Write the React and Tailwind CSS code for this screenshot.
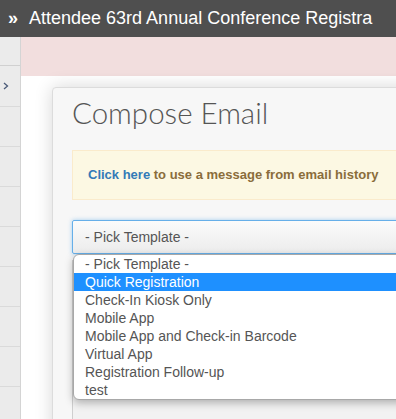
const templates = [
  '- Pick Template -',
  'Quick Registration',
  'Check-In Kiosk Only',
  'Mobile App',
  'Mobile App and Check-in Barcode',
  'Virtual App',
  'Registration Follow-up',
  'test',
];

function SideRail() {
  return (
    <div className="flex w-[21px] shrink-0 flex-col border-r border-[#d4d4d4] bg-[#ebebeb]">
      <div className="h-[29px] border-b border-[#d0d0d0]" />
      <div className="flex h-[41px] items-center border-b border-[#dadada] pl-[3px]">
        <svg width="6" height="8" viewBox="0 0 6 8" fill="none">
          <path d="M1 1l3.5 3L1 7" stroke="#4a5a78" strokeWidth="1.3" />
        </svg>
      </div>
      {[0, 1, 2, 3, 4, 5, 6].map((row) => (
        <div key={row} className="h-[40px] shrink-0 border-b border-[#dadada]" />
      ))}
    </div>
  );
}

export default function App() {
  return (
    <div className="flex h-[419px] w-[396px] flex-col overflow-hidden bg-white font-['Liberation_Sans',Arial,sans-serif]">
      <header className="flex h-[37px] shrink-0 items-center gap-[11px] whitespace-nowrap bg-[#4f4f4f] pl-[8px] text-[18px] text-white">
        <span className="font-bold">»</span>
        <span>Attendee 63rd Annual Conference Registra</span>
      </header>

      <div className="flex min-h-0 flex-1">
        <SideRail />

        <div className="flex min-w-0 flex-1 flex-col overflow-hidden">
          <div className="h-[39px] shrink-0 bg-[#f2dede]" />

          <div className="flex-1 pl-[31px] pt-[11px]">
            <div className="h-[400px] w-[420px] rounded-tl-[4px] border border-[#dcdcdc] bg-[#f7f7f7] pl-[19px] pt-[8px] shadow-[0_0_18px_rgba(0,0,0,0.16)]">
              <h1 className="font-['Lato',sans-serif] text-[29.5px] font-light leading-[33px] text-[#555]">
                Compose Email
              </h1>

              <div className="mt-[21px] border border-[#faebcc] bg-[#fcf8e3] px-[15px] py-[15px] text-[13px] font-bold leading-[18px] text-[#8a6d3b]">
                <span className="text-[#337ab7]">Click here</span> to use a message from email history
              </div>

              <div className="relative mt-[20px]">
                <div className="flex h-[34px] items-center rounded-[2px] border border-[#66afe9] bg-gradient-to-b from-[#fbfbfb] to-[#ececec] pl-[12px] text-[14px] text-[#555] shadow-[0_0_4px_rgba(102,175,233,0.6)]">
                  - Pick Template -
                </div>

                <div className="mt-[6px] h-[180px] border-l border-t border-[#cfcfcf] bg-[#f2f2f2]" />

                <ul className="absolute left-[1px] top-[34px] w-[400px] overflow-hidden rounded-[6px] border border-[#a8a8a8] bg-white shadow-[0_3px_8px_rgba(0,0,0,0.28)]">
                  {templates.map((name, index) => (
                    <li
                      key={name}
                      className={
                        index === 1
                          ? 'h-[18px] bg-[#1e90ff] pl-[11px] text-[14px] leading-[18px] text-white'
                          : 'h-[18px] pl-[11px] text-[14px] leading-[18px] text-[#555]'
                      }
                    >
                      {name}
                    </li>
                  ))}
                </ul>
              </div>
            </div>
          </div>
        </div>
      </div>
    </div>
  );
}
